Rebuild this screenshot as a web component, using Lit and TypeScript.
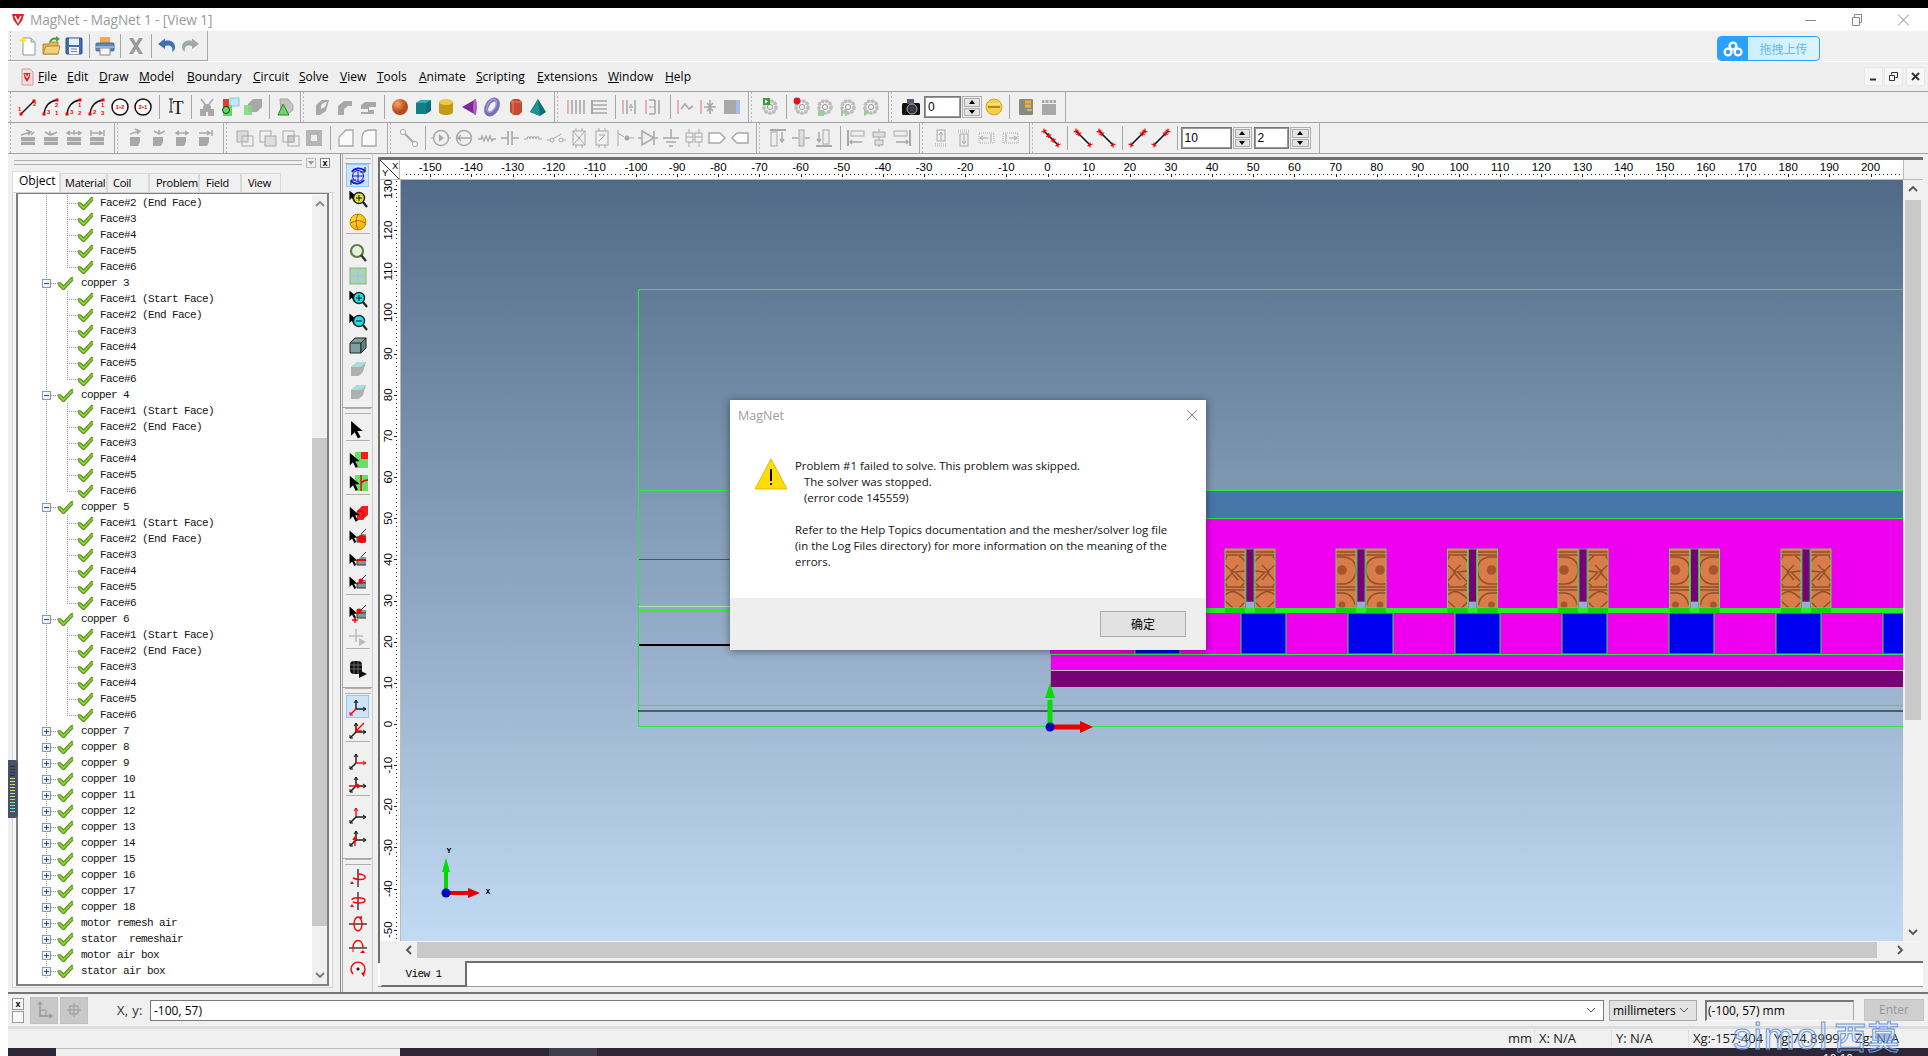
import { LitElement, html, svg, css } from "lit";
import { customElement } from "lit/decorators.js";

const D = "#a8a8a8";
const R = "#f00";
const sq = (x: number, y: number, c = R) => svg`<rect x=${x - 1.5} y=${y - 1.5} width="3" height="3" fill=${c} />`;
const t = (x: number, y: number, s: string, c = R, f = 6) => svg`<text x=${x} y=${y} font-size=${f} fill=${c} font-family="Liberation Sans" font-weight="700">${s}</text>`;
const cursor = (x = 0, y = 0, s = 1) => svg`<path transform="translate(${x} ${y}) scale(${s})" d="M2 2v14l3.5-3.5 3 6 2.5-1.3-3-5.7h5z" fill="#000"/>`;
const lens = (c: string, sign = "", tool = true) => svg`${tool ? cursor(0, 0, 0.7) : ""}<circle cx="11" cy="9" r="5.5" fill=${c} stroke="#222" stroke-width="1.4"/><path d="M15 13l4 5" stroke="#222" stroke-width="2.2"/>${sign === "+" ? svg`<path d="M8 9h6M11 6v6" stroke="#111"/>` : sign === "-" ? svg`<path d="M8 9h6" stroke="#111"/>` : ""}`;
const arcI = (a: string, b: string, c: string) => svg`<path d="M3 17C4 9 9 4 16 3" fill="none" stroke="#111" stroke-width="1.3"/>${sq(3, 17)}${sq(16, 3)}${t(6, 17, a)}${t(14, 10, b)}${t(14, 18, c)}`;
const circ = (s: string) => svg`<circle cx="10" cy="10" r="8" fill="#fff" stroke="#111" stroke-width="1.5"/><text x="10" y="12" text-anchor="middle" font-size="6" fill="#e00" font-weight="700" font-family="Liberation Sans">${s}</text>`;
const blockA = (d: string) => svg`<rect x="3" y="9" width="14" height="8" fill=${D}/><rect x="3" y="13" width="14" height="1" fill="#ddd"/><path d=${d} stroke=${D} stroke-width="1.5" fill="none"/>`;
const blockB = (d: string) => svg`<path d="M4 9h10v5l-2 4H4z" fill=${D}/><path d=${d} stroke=${D} stroke-width="1.5" fill="none"/>`;
const overlap = (a: number) => svg`<rect x="2" y="3" width="11" height="11" fill=${a === 1 ? "#ddd" : "none"} stroke=${D}/><rect x="7" y="8" width="11" height="10" fill=${a === 2 ? "#ddd" : "none"} stroke=${D}/>${a === 3 ? svg`<rect x="7" y="8" width="6" height="6" fill="#ccc" stroke=${D}/>` : ""}`;
const gear = (c = "#bdbdbd") => svg`<circle cx="10" cy="10" r="6" fill="none" stroke=${c} stroke-width="3.6" stroke-dasharray="2.6 1.4"/><circle cx="10" cy="10" r="6.2" fill="none" stroke=${c} stroke-width="1.4"/><circle cx="10" cy="10" r="2.6" fill="#eee" stroke="#999"/>`;
const vbars = (a: string) => svg`<path d=${a} stroke=${D} stroke-width="1.6" fill="none"/><path d="M2 3v14" stroke="#e9a0a0" stroke-width="1.6"/>`;
const redDiag = (flip = false, dense = false) => {
  const pts = dense ? [0, 0.33, 0.66, 1] : [0, 1];
  return svg`<g transform=${flip ? "translate(20 0) scale(-1 1)" : ""}><path d="M3 3L17 17" stroke="#111" stroke-width="1.6"/>${pts.concat(dense ? [] : [0.2]).map((p) => svg`<path d="M${3 + 14 * p - 2.5} ${3 + 14 * p + 1}l5 -2M${3 + 14 * p} ${3 + 14 * p - 2.5}v5" stroke=${R} stroke-width="1.2"/>`)}</g>`;
};
const face = (extra: any, fill = "#7d9a9b") => svg`${cursor(0, 2, 0.75)}<path d="M9 10l4-3h5v8H9z" fill=${fill}/><path d="M13 7l5-5" stroke="#333"/><path d="M9 10h9M9 10v5h9" stroke="#333" fill="none"/>${extra}`;
const triad = (x: string, y: string, z: string) => svg`<path d="M8 3v9" stroke=${y} stroke-width="1.4"/><path d="M6 6l2-3 2 3" fill="none" stroke=${y}/><path d="M8 12h10" stroke=${x} stroke-width="1.4"/><path d="M15 10l3 2-3 2" fill="none" stroke=${x}/><path d="M8 12l-6 6" stroke=${z} stroke-width="1.4"/><path d="M2 15v3h3" fill="none" stroke=${z}/>`;
const rot = (d: string) => svg`<path d="M10 1v18" stroke="#111" stroke-width="1.2"/><path d=${d} fill="none" stroke=${R} stroke-width="1.4"/><path d="M4 13l-2 3 4 0z" fill=${R}/>`;

const IC: Record<string, any> = {
  new: svg`<path d="M5 2h8l4 4v13H5z" fill="#fff" stroke="#8a9aa8"/><path d="M13 2v4h4" fill="#dde" stroke="#8a9aa8"/><path d="M5 0l1.3 3 3 1.2-3 1.2L5 8.5 3.7 5.4 .7 4.2l3-1.2z" fill="#ffdd33"/>`,
  open: svg`<path d="M2 8h6l1-2h8v12H2z" fill="#e3b755" stroke="#b08a30"/><path d="M2 18l3-8h14l-2 8z" fill="#f4d27c" stroke="#b08a30"/><path d="M9 6c1-3 4-4 7-3" stroke="#3aa53a" stroke-width="2" fill="none"/><path d="M15 0l4 3-4 3z" fill="#3aa53a"/>`,
  save: svg`<rect x="2" y="2" width="16" height="16" rx="1" fill="#3f6fa8" stroke="#24507f"/><rect x="5" y="2.500" width="10" height="6.500" fill="#e9eef5"/><rect x="5" y="11" width="10" height="7" fill="#f4f4f4"/><rect x="7" y="12.500" width="6" height="1" fill="#789"/><rect x="7" y="15" width="6" height="1" fill="#789"/>`,
  print: svg`<rect x="5" y="1" width="10" height="6" fill="#f4a944"/><rect x="1" y="7" width="18" height="8" rx="1" fill="#5a88b8" stroke="#4a6a8a"/><rect x="5" y="12" width="10" height="7" fill="#f5f5f5" stroke="#888"/><rect x="1" y="10" width="18" height="2" fill="#8fb4d8"/>`,
  del: svg`<path d="M3 2h4l3 5 3-5h4l-5 8 5 8h-4l-3-5-3 5H3l5-8z" fill="#999"/>`,
  undo: svg`<path d="M8 5c5-1.500 10 1 10 6 0 2-1 4-3 5 1-2.500 0-6-3-6.500-1.500-.3-3 0-4 .5v3L1 8l7-5.500z" fill="#3e73b5"/>`,
  redo: svg`<path d="M12 5C7 3.500 2 6 2 11c0 2 1 4 3 5-1-2.500 0-6 3-6.500 1.500-.3 3 0 4 .5v3l7-5-7-5.500z" fill="#a0a8a8"/>`,
  line: svg`<path d="M3 17L16 4" stroke="#111" stroke-width="1.4"/>${sq(3, 17)}${sq(16, 4)}${t(0, 14, "1")}${t(15, 9, "2")}`,
  arc1: arcI("3", "2", "1"), arc2: arcI("3", "1", "2"), arc3: arcI("2", "1", "3"),
  c12: circ("1•2"), c21: circ("2•1"),
  it: svg`<path d="M4 2h4M6 2v13M4 15h4" stroke="#111" fill="none"/><text x="13" y="17" text-anchor="middle" font-size="18" font-family="Liberation Serif" fill="#111">T</text>`,
  scis: svg`<path d="M4 2l6 8 6-8M10 9" stroke=${D} stroke-width="1.5" fill="none"/><path d="M3 12h6v7H3zM11 12h6v7h-6z" fill=${D}/><circle cx="10" cy="11" r="4" fill=${D}/>`,
  redg: svg`<rect x="10" y="1" width="9" height="8" fill="#bfe9f4" stroke="#8cc"/><rect x="3" y="8" width="9" height="11" fill="#62d862"/><rect x="3" y="2" width="6" height="8" fill="#e33"/><circle cx="6" cy="13" r="3.500" fill="none" stroke="#141"/>`,
  grayg: svg`<path d="M5 7l5-5h9v8l-5 5H5z" fill=${D}/><path d="M1 8h8v10H1z" fill="#7fd87f" opacity=".85"/>`,
  tri: svg`<path d="M5 2h8l5 6v5l-4 3H6z" fill="#c4c4c4" stroke="#aaa"/><path d="M3 18L8 7l6 11z" fill="#73d173" stroke="#2b8a2b"/>`,
  ext1: svg`<path d="M4 8l6-5h7l-3 11-6 4H4z" fill=${D}/><path d="M9 8l4-3h2l-2 5-4 2z" fill="#e8f4f4"/>`,
  ext2: svg`<path d="M3 18V9l6-5h8v5h-4l-4 3v6z" fill=${D}/>`,
  ext3: svg`<path d="M3 12V8l4-3h11v5h-7v3h5v4H3v-2h7v-3z" fill=${D}/>`,
  sph: svg`<defs><radialGradient id="sg" cx=".35" cy=".3"><stop offset="0" stop-color="#f5a86a"/><stop offset="1" stop-color="#b54c1c"/></radialGradient></defs><circle cx="10" cy="10" r="8" fill="url(#sg)"/>`,
  box: svg`<path d="M3 6l5-3h10v11l-5 3H3z" fill="#0e6f76"/><path d="M3 6h10v11H3z" fill="#0f7f88"/><path d="M3 6l5-3h10l-5 3z" fill="#3aa9ae"/>`,
  cyl: svg`<path d="M3 5v10c0 4 14 4 14 0V5z" fill="#c29a14"/><ellipse cx="10" cy="5" rx="7" ry="3" fill="#ecc94a"/>`,
  cone: svg`<path d="M3 10L17 2v16z" fill="#7b2b92"/><ellipse cx="16" cy="10" rx="2" ry="8" fill="#b060c8"/>`,
  torus: svg`<ellipse cx="10" cy="10" rx="5" ry="8" transform="rotate(30 10 10)" fill="none" stroke="#7a6fb5" stroke-width="4"/><ellipse cx="9" cy="9" rx="4" ry="7" transform="rotate(30 10 10)" fill="none" stroke="#a79be0" stroke-width="1.4"/>`,
  barrel: svg`<path d="M5 5l3-3h6l3 3v10l-3 3H8l-3-3z" fill="#c44a30"/><path d="M8 2v16M5 5h12" stroke="#e8825c"/>`,
  pyr: svg`<path d="M10 2l8 13-6 4-10-4z" fill="#0f6f78"/><path d="M10 2l2 17-10-4z" fill="#1f9296"/>`,
  v1: vbars("M6 3v14M10 3v14M14 3v14M18 3v14"),
  v2: svg`<path d="M3 3v14" stroke=${D} stroke-width="2"/><path d="M3 4h15M3 8h15M3 12h15M3 16h15" stroke=${D} stroke-width="1.6"/>`,
  v3: svg`${vbars("M6 3v14M14 3v14")}<path d="M8 10h4M10 7v2M10 12v2" stroke=${D} stroke-width="1.5"/>`,
  v4: svg`${vbars("M5 3h6M11 3v14M5 17h6M15 3v14")}<path d="M5 10h6" stroke=${D}/>`,
  v5: svg`${vbars("M5 12l4-5 4 5 4-3")}`,
  v6: svg`${vbars("M5 10h12M11 3v5M11 12v5M8 6l3 3 3-3M8 14l3-3 3 3")}`,
  v7: svg`<rect x="2" y="3" width="15" height="14" fill=${D}/><rect x="14" y="3" width="4" height="14" fill="#a8b8f0"/>`,
  run: svg`${gear()}<path d="M3 1h7v7H3z" fill="#3a9a3a"/><path d="M5 2.500l3 2-3 2z" fill="#fff"/>`,
  grec: svg`${gear()}<circle cx="5" cy="4" r="3.400" fill="#e01025"/>`,
  g1: svg`${gear()}<path d="M3 13h6v6H3z" fill="#9bcc9b"/>`,
  g2: svg`${gear()}<path d="M3 12h2v7H3zM7 12h2v7H7z" fill="#9bcc9b"/>`,
  g3: svg`${gear()}<path d="M3 12l6 3.500L3 19z" fill="#9bcc9b"/>`,
  cam: svg`<rect x="1" y="6" width="18" height="12" rx="1.500" fill="#111"/><rect x="6" y="2" width="7" height="5" fill="#556"/><circle cx="11" cy="12" r="5" fill="#333" stroke="#aaa"/><circle cx="11" cy="12" r="2.500" fill="#345"/>`,
  gold: svg`<circle cx="10" cy="10" r="8" fill="#f0d050" stroke="#d8a820"/><rect x="4" y="9" width="12" height="2" fill="#b88a00"/><path d="M4 7h12" stroke="#fff3b0"/>`,
  film: svg`<rect x="3" y="2" width="14" height="16" rx="1" fill="#8a8a7a"/><path d="M9 5h6M9 9h6" stroke="#f5b030" stroke-width="3"/><path d="M11 13h5" stroke="#ddd"/>`,
  clap: svg`<rect x="3" y="7" width="14" height="11" fill=${D}/><path d="M3 3h14v3H3z" fill=${D}/><path d="M6 3v3M10 3v3M14 3v3" stroke="#eee"/>`,
  a1: blockA("M3 7l10-3M8 2l5 2-3 3M16 4l-3 3"), a2: blockA("M4 4l5 3 7-3M9 3v4l4-1"), a3: blockA("M3 5h14M6 3l-3 2 3 2M14 3l3 2-3 2M10 2v5"), a4: blockA("M3 5h11M12 3l3 2-3 2M17 2v6M4 2v6"),
  b1: blockB("M4 6l10-3M9 1l5 2-3 3"), b2: blockB("M5 3l5 3 6-3M10 2v4l3-1"), b3: blockB("M4 5h12M7 3L4 5l3 2M13 3l3 2-3 2"), b4: blockB("M4 5h10M12 3l3 2-3 2M17 2v6"),
  o1: overlap(1), o2: overlap(2), o3: overlap(3),
  o4: svg`<rect x="2" y="2" width="16" height="16" fill="#b5b5b5"/><rect x="7" y="7" width="6" height="6" fill="#eee"/>`,
  cham: svg`<path d="M3 18V9l7-7h7v16z" fill="#fafafa" stroke=${D} stroke-width="1.3"/>`,
  fil: svg`<path d="M3 18V10c0-5 3-8 8-8h6v16z" fill="#fafafa" stroke=${D} stroke-width="1.3"/>`,
  wire: svg`<path d="M4 4l12 12" stroke=${D} stroke-width="2"/><circle cx="4" cy="4" r="2.600" fill="#fff" stroke=${D}/><circle cx="16" cy="16" r="2.600" fill="#fff" stroke=${D}/>`,
  srcv: svg`<circle cx="10" cy="10" r="7.500" fill="none" stroke=${D} stroke-width="1.500"/><path d="M8 6l5 4-5 4z" fill=${D}/><path d="M0 10h3M17 10h3" stroke=${D}/>`,
  srci: svg`<circle cx="10" cy="10" r="7.500" fill="none" stroke=${D} stroke-width="1.500"/><path d="M3 10h14M7 7l-3 3 3 3" fill="none" stroke=${D} stroke-width="1.3"/>`,
  res: svg`<path d="M1 11h3l1-3 2 5 2-5 2 5 2-5 2 5 1-2h3" fill="none" stroke=${D} stroke-width="1.3"/>`,
  capa: svg`<path d="M1 10h7M12 10h7M8 3v14M12 3v14" stroke=${D} stroke-width="1.6"/>`,
  ind: svg`<path d="M1 11h3c0-3 3-3 3 0 0-3 3-3 3 0 0-3 3-3 3 0 0-3 3-3 3 0h3" fill="none" stroke=${D} stroke-width="1.2"/>`,
  sw: svg`<circle cx="6" cy="12" r="2" fill="none" stroke=${D}/><circle cx="15" cy="12" r="2" fill="none" stroke=${D}/><path d="M7 11l8-5M1 12h3M17 12h3" stroke=${D}/>`,
  bx: svg`<rect x="4" y="3" width="12" height="14" fill="none" stroke=${D}/><path d="M4 3l12 14M16 3L4 17M7 0v3M13 0v3M7 17v3M13 17v3" stroke=${D}/>`,
  bb: svg`<rect x="4" y="3" width="12" height="14" fill="none" stroke=${D}/><path d="M7 7h6M13 7l-6 6M7 0v3M13 0v3M7 17v3M13 17v3" stroke=${D}/>`,
  bsw: svg`<path d="M3 2v16" stroke=${D}/><path d="M3 5l6 4" stroke=${D}/><circle cx="12" cy="10" r="2.500" fill=${D}/><path d="M15 10h4" stroke=${D}/>`,
  dio: svg`<path d="M0 10h4M16 10h4M16 3v14" stroke=${D} stroke-width="1.500"/><path d="M4 3l12 7-12 7z" fill="#eee" stroke=${D} stroke-width="1.500"/>`,
  gnd: svg`<path d="M10 1v9M2 10h16M5 14h10M8 18h4" stroke=${D} stroke-width="1.500"/>`,
  dbl: svg`<rect x="2" y="5" width="7" height="9" fill="none" stroke=${D}/><rect x="11" y="5" width="7" height="9" fill="none" stroke=${D}/><path d="M5 1v4M15 1v4M5 14v5M15 14v5M2 9h7M11 9h7" stroke=${D}/>`,
  tagr: svg`<path d="M2 5h11l5 5-5 5H2z" fill="#fff" stroke=${D} stroke-width="1.500"/>`,
  tagl: svg`<path d="M18 5H7l-5 5 5 5h11z" fill="#fff" stroke=${D} stroke-width="1.500"/>`,
  al1: svg`<path d="M2 2h16" stroke=${D} stroke-width="2"/><rect x="3" y="4" width="6" height="14" fill="#eee" stroke=${D}/><path d="M14 4v9M12 11l2 3 2-3" stroke=${D} stroke-width="1.400" fill="none"/>`,
  al2: svg`<rect x="8" y="2" width="5" height="16" fill="#ddd" stroke=${D}/><path d="M1 10h6M19 10h-5" stroke=${D} stroke-width="1.600"/>`,
  al3: svg`<path d="M2 18h16" stroke=${D} stroke-width="2"/><rect x="9" y="2" width="6" height="14" fill="#eee" stroke=${D}/><path d="M5 4v10M3 11l2 3 2-3" stroke=${D} stroke-width="1.400" fill="none"/>`,
  al4: svg`<path d="M2 2v16" stroke=${D} stroke-width="2"/><rect x="5" y="3" width="13" height="5" fill="#eee" stroke=${D}/><path d="M4 14h12M6 12l-2 2 2 2" stroke=${D} stroke-width="1.400" fill="none"/>`,
  al5: svg`<path d="M10 1v18" stroke=${D}/><rect x="4" y="4" width="12" height="5" fill="#ddd" stroke=${D}/><rect x="6" y="12" width="8" height="5" fill="#ddd" stroke=${D}/>`,
  al6: svg`<path d="M18 2v16" stroke=${D} stroke-width="2"/><rect x="2" y="3" width="13" height="5" fill="#eee" stroke=${D}/><path d="M16 14H4M14 12l2 2-2 2" stroke=${D} stroke-width="1.400" fill="none"/>`,
  ds1: svg`<rect x="6" y="2" width="8" height="11" fill="#eee" stroke=${D}/><path d="M10 12V5M8 7l2-3 2 3" stroke=${D} fill="none"/><path d="M4 16h12M4 18h12" stroke=${D} stroke-dasharray="1 1"/>`,
  ds2: svg`<path d="M4 2h12M4 4h12" stroke=${D} stroke-dasharray="1 1"/><rect x="6" y="6" width="8" height="12" fill="#eee" stroke=${D}/><path d="M10 7v8M8 13l2 3 2-3" stroke=${D} fill="none"/>`,
  ds3: svg`<rect x="2" y="5" width="15" height="10" fill="#eee" stroke=${D} stroke-dasharray="1 1"/><path d="M11 10H4M6 8l-3 2 3 2M14 6v8" stroke=${D} fill="none"/>`,
  ds4: svg`<rect x="3" y="5" width="15" height="10" fill="#eee" stroke=${D} stroke-dasharray="1 1"/><path d="M9 10h7M14 8l3 2-3 2M6 6v8" stroke=${D} fill="none"/>`,
  rd0: redDiag(false, true), rd1: redDiag(), rd2: redDiag(), rd3: redDiag(true), rd4: redDiag(true),
  vrot: svg`<path d="M4 6c2-4 9-5 13-1M16 14c-3 4-9 5-13 1" fill="none" stroke="#1a1ae0" stroke-width="1.800"/><path d="M17 1v5h-5M3 19v-5h5" fill="none" stroke="#111"/><circle cx="10" cy="10" r="5.500" fill="none" stroke="#1a1ae0"/><path d="M4.500 10h11M10 4.500v11" stroke="#1a1ae0"/>`,
  vz1: lens("#d8e040", "+"),
  vball: svg`<defs><radialGradient id="yb" cx=".4" cy=".35"><stop offset="0" stop-color="#ffef50"/><stop offset="1" stop-color="#f0b800"/></radialGradient></defs><circle cx="10" cy="10" r="8" fill="url(#yb)" stroke="#b89000"/><path d="M3 11c5-3 9-3 14 0M10 2c-3 6-2 11 0 16" stroke="#e04020" fill="none"/>`,
  vz2: svg`<circle cx="9" cy="8" r="6" fill="#e6f0e0" stroke="#5a8040" stroke-width="2.200"/><path d="M13 12l5 6" stroke="#333" stroke-width="2.400"/>`,
  vfit: svg`<rect x="2" y="2" width="16" height="16" fill="#a9d8a9" stroke="#8ab08a"/><path d="M10 3l3 3h-2v3h3V7l3 3-3 3v-2h-3v3h2l-3 3-3-3h2v-3H6v2l-3-3 3-3v2h3V6H7z" fill="#a8c4e8"/>`,
  vz3: lens("#20e0e8", "+"), vz4: lens("#20e0e8", "-"),
  vbox: svg`<path d="M2 8l5-5h11l-5 5v10H2z" fill="#7d9fa0" stroke="#222"/><path d="M13 8l5-5v10l-5 5z" fill="#5f8283" stroke="#222"/><path d="M2 8h11l5-5" fill="none" stroke="#222"/>`,
  vg1: svg`<path d="M3 9l6-5h9l-3 10-4 4H3z" fill="#b0b0b0"/><path d="M3 9l6-5h9l-5 5z" fill="#a8dce0"/>`,
  arrow: svg`${cursor(1, 0, 1.05)}`,
  cg1: svg`<rect x="7" y="2" width="13" height="16" fill="#69dc69"/><path d="M13 2h7v7h-7z" fill="#f02020"/>${cursor(0, 1, .9)}`,
  cg2: svg`<rect x="7" y="2" width="13" height="16" fill="#69dc69"/><path d="M13 2v16M13 10c2-2 4-3 7-3" stroke="#e00" stroke-width="1.400" fill="none"/>${cursor(0, 1, .9)}`,
  f1: svg`<path d="M9 7l5-5h6v9l-6 5H9z" fill="#f02020"/><path d="M9 7h6v9" stroke="#c00" fill="none"/>${cursor(0, 1, .9)}`,
  f2: face(svg`<circle cx="14" cy="12" r="4" fill="#f00"/>`),
  f3: face(svg`<path d="M9 10h9" stroke="#f00" stroke-width="2"/>`),
  f4: face(svg`<circle cx="13" cy="8" r="2.500" fill="#f00"/>`),
  f5: svg`<g transform="translate(0 -1)">${face(svg`<circle cx="11" cy="8" r="2.600" fill="#f00"/>`)}</g><path d="M7 13v6M4 16h6" stroke="#f00" stroke-width="1.400"/>`,
  cross: svg`<path d="M8 2v13M1 9h14" stroke="#bbb" stroke-width="1.500"/><path d="M11 11l7 4-7 4z" fill="#bbb"/>`,
  mesh: svg`<rect x="2" y="3" width="12" height="13" rx="4" fill="#111"/><path d="M2 7h12M2 11h12M6 3v13M10 3v13" stroke="#888" stroke-width=".7"/><path d="M11 12l8 4-8 4z" fill="#111"/>`,
  ax1: triad("#111", "#111", R), ax2: svg`${triad("#111", "#111", "#111")}<path d="M16 3L8 11M8 5v6h6" stroke=${R} stroke-width="1.400" fill="none"/>`,
  ax3: triad(R, "#111", "#111"), ax4: svg`${triad("#111", "#111", "#111")}<path d="M1 12h11M9 10l3 2-3 2" stroke=${R} stroke-width="1.400" fill="none"/>`,
  ax5: triad("#111", R, "#111"), ax6: svg`${triad("#111", "#111", "#111")}<path d="M7 18v-9M5 12l2-3 2 3" stroke=${R} stroke-width="1.400" fill="none"/>`,
  r1: rot("M10 6c5 0 8 2 7 4s-8 2-12 0"),
  r2: rot("M4 9c0-3 12-3 13 0s-7 4-12 2"),
  r3: svg`<path d="M1 10h18" stroke="#111" stroke-width="1.200"/><ellipse cx="10" cy="10" rx="4" ry="7" fill="none" stroke=${R} stroke-width="1.400"/><path d="M14 2l-3 1 3 2z" fill=${R}/>`,
  r4: svg`<path d="M1 11h18" stroke="#111" stroke-width="1.200"/><path d="M5 11c0-10 10-10 10 0" fill="none" stroke=${R} stroke-width="1.400"/><path d="M15 13l-3 3h5z" fill=${R}/><path d="M5 11v4" stroke=${R}/>`,
  r5: svg`<path d="M5 14A7 7 0 1 1 15 14" fill="none" stroke=${R} stroke-width="1.400"/><path d="M13 13l3 4 1-5z" fill=${R}/><circle cx="10" cy="9" r="1" fill="#111"/><path d="M8 9h4M10 7v4" stroke="#111" stroke-width=".8"/>`,
};

const ROW3 = [
  { w: 293, g: 8.5, items: ["line", "arc1", "arc2", "arc3", "c12", "c21", "|", "it", "|", "scis", "redg", "grayg", "|", "tri"] },
  { w: 254, g: 9.5, items: ["ext1", "ext2", "ext3", "|", "sph", "box", "cyl", "cone", "torus", "barrel", "pyr"] },
  { w: 194, g: 9.5, items: ["v1", "v2", "|", "v3", "v4", "|", "v5", "v6", "v7"] },
  { w: 140, g: 9.5, items: ["run", "|", "grec", "g1", "g2", "g3"] },
  { w: 177, g: 10.5, items: ["cam", "num:0:37:1.5", "spin:20", "gold", "|", "film", "clap"] },
];
const ROW4 = [
  { w: 107, g: 8.5, items: ["a1", "a2", "a3", "a4"] },
  { w: 109, g: 9.5, items: ["b1", "b2", "b3", "b4"] },
  { w: 164, g: 9.5, items: ["o1", "o2", "o3", "o4", "|", "cham", "fil"] },
  { w: 369, g: 9.5, items: ["wire", "|", "srcv", "srci", "res", "capa", "ind", "sw", "bx", "bb", "bsw", "dio", "gnd", "dbl", "tagr", "tagl"] },
  { w: 163, g: 9.5, items: ["al1", "al2", "al3", "|", "al4", "al5", "al6"] },
  { w: 110, g: 9.5, items: ["ds1", "ds2", "ds3", "ds4"] },
  { w: 290, g: 9.5, items: ["rd0", "|", "rd1", "rd2", "|", "rd3", "rd4", "|", "num:10:51:-1", "spin:19", "num:2:35:2", "spin:21"] },
];
const VT = [
  { h: 250, items: ["vrot:sel", "vz1", "vball", "-", "vz2", "vfit", "vz3", "vz4", "vbox", "vg1", "vg1"] },
  { h: 280, items: ["arrow", "-", "cg1", "cg2", "-", "f1", "f2", "f3", "f4", "-", "f5", "cross", "-", "mesh"] },
  { h: 171, items: ["ax1:sel", "ax2", "-", "ax3", "ax4", "-", "ax5", "ax6"] },
  { h: 128, items: ["r1", "r2", "r3", "r4", "r5"] },
];

const MENU = [["F", "ile", 29], ["E", "dit", 32], ["D", "raw", 40], ["M", "odel", 48], ["B", "oundary", 66], ["C", "ircuit", 46], ["S", "olve", 41], ["V", "iew", 37], ["T", "ools", 42], ["A", "nimate", 57], ["S", "cripting", 61], ["E", "xtensions", 71], ["W", "indow", 57], ["H", "elp", 40]] as const;

type Row = { k: "p" | "c" | "x"; s: string; last?: boolean };
const TREE: Row[] = [];
const faces = ["Face#1 (Start Face)", "Face#2 (End Face)", "Face#3", "Face#4", "Face#5", "Face#6"];
faces.slice(1).forEach((s, i) => TREE.push({ k: "c", s, last: i === 4 }));
for (const n of [3, 4, 5, 6]) {
  TREE.push({ k: "p", s: `copper ${n}` });
  faces.forEach((s, i) => TREE.push({ k: "c", s, last: i === 5 }));
}
for (let n = 7; n <= 18; n++) TREE.push({ k: "x", s: `copper ${n}` });
["motor remesh air", "stator  remeshair", "motor air box", "stator air box"].forEach((s) => TREE.push({ k: "x", s }));

const X = (v: number) => 1047.5 + 4.115 * v;
const Y = (v: number) => 724 - 4.115 * v;
const range = (a: number, b: number, s = 1) => { const r: number[] = []; for (let i = a; i <= b; i += s) r.push(i); return r; };
const G = "#2ee83a";

const half = (x: number, kind: string, flip: boolean) => svg`
  <g transform=${`translate(${flip ? x + 20 : x} 549) scale(${flip ? -1 : 1} 1)`}>
    <rect width="20" height="59" fill="#d87c49"/>
    <g fill="none" stroke="#8f4f2a" stroke-width="1.4">
      <path d="M0 3h20M0 6h20M0 38h20M0 41h20"/>
      ${kind === "x"
        ? svg`<path d="M2 7l-2 4M14 7c3 2 5 3 6 6M0 16l8 7-8 9M20 22l-10 1 10 10M6 23l7-7M6 23l7 8M2 37l-2-3M16 37l4-3"/><path d="M0 46c4-3 8-4 10-3 3 1 6 3 10 7M0 52l8 7M14 59l6-6"/>`
        : svg`<path d="M0 8h8c8 1 12 6 12 13s-4 13-12 14H0"/><path d="M0 44h8c6 1 10 5 11 12"/>`}
    </g>
    ${kind === "x" ? "" : svg`<circle cx="6" cy="21" r="4.800" fill="#a6552f"/><circle cx="6" cy="56" r="3.400" fill="#a6552f"/>`}
  </g>`;
const COILS: [number, string, string][] = [[1225, "x", "x"], [1336, "d", "d"], [1447.5, "x", "d"], [1558, "d", "x"], [1669.5, "d", "d"], [1781, "x", "x"]];

@customElement("app-icon")
class AppIcon extends LitElement {
  static properties = { name: {} };
  name = "";
  static styles = css`:host{display:block;width:20px;height:20px}svg{display:block;overflow:visible}`;
  render() {
    return html`<svg width="20" height="20" viewBox="0 0 20 20">${IC[this.name]}</svg>`;
  }
}

@customElement("app-root")
export class AppRoot extends LitElement {
  static styles = css`
    :host{display:block;width:1928px;height:1056px;overflow:hidden;position:relative;background:#fff;font-family:"Open Sans","Noto Sans CJK SC",sans-serif;font-size:12px;color:#000}
    .black{height:8px;background:#000}
    .shell{display:flex;height:1040px}
    .strip{width:8px;background:#fff;flex:none}
    .app{flex:1;display:flex;flex-direction:column;min-width:0;background:#f0f0f0}
    .title{height:23px;background:#fff;display:flex;align-items:center;padding-left:3px;color:#9a9a9a;font-size:13.7px;letter-spacing:-.1px;gap:5px;flex:none}
    .winbtns{margin-left:auto;display:flex;margin-right:2px}
    .winbtns svg{display:block;width:46px;height:14px}
    .row{display:flex;height:30px;border-bottom:1px solid #a2a2a2;box-sizing:content-box;flex:none}
    .row.r1{border-bottom:1px solid #fff;position:relative}
    .grp{display:flex;align-items:center;height:30px;border-right:1px solid #aaa;box-sizing:border-box;flex:none}
    .grp.b{border-bottom:1px solid #a2a2a2}
    .grip{align-self:stretch;flex:none;background-image:radial-gradient(circle,#b8b8b8 .8px,transparent .9px);background-size:3px 4px;background-repeat:repeat-y;background-position:1px 3px,4px 3px}
    .slot{width:23px;height:24px;display:flex;align-items:center;justify-content:center;flex:none}
    .sep{width:9px;height:24px;flex:none;display:flex;justify-content:center}
    .sep.n{width:8px}
    .sep::before{content:"";width:1px;background:#a6a6a6}
    .num{height:22px;box-sizing:border-box;border:1px solid #777;outline:1px solid #999;outline-offset:-2px;background:#fff;padding:0 3px;line-height:20px;font-family:"Liberation Sans",sans-serif;font-size:12px;flex:none}
    .spin{display:flex;flex-direction:column;gap:1px;height:22px;border:1px solid #b0b0b0;box-sizing:border-box;padding:1px;flex:none;margin-left:1px}
    .spin i{flex:1;background:#e4e4e4;border:1px solid #aaa;display:flex;align-items:center;justify-content:center}
    .up{width:0;height:0;border:3px solid transparent;border-top:0;border-bottom:4px solid #000}
    .dn{width:0;height:0;border:3px solid transparent;border-bottom:0;border-top:4px solid #000}
    .cloud{position:absolute;left:1709px;top:5px;width:103px;height:25px;box-sizing:border-box;border:1px solid #2aa0ff;border-radius:4px;display:flex;overflow:hidden;background:linear-gradient(90deg,#c8ecff,#dcf3ff)}
    .cloud b{width:30px;background:#2aa0ff;display:flex;align-items:center;justify-content:center}
    .cloud span{flex:1;text-align:center;color:#5fbcf4;font-size:12px;line-height:23px;font-family:"Noto Sans CJK SC",sans-serif}
    .menu{align-items:center;padding-left:8px;background:#efefef;height:29px}
    .menu .logo{width:22px;display:flex;justify-content:center}
    .mi{flex:none;font-size:12px;white-space:pre}
    .mdi{margin-left:auto;display:flex;gap:1px;margin-right:3px}
    .mdi i{width:17px;height:17px;background:#f6f6f6;border:1px solid #e8e8e8;display:flex;align-items:center;justify-content:center}
    .mdi svg{display:block}
    .main{flex:none;height:838px;display:flex}
    .left{width:333px;flex:none;border-right:1px solid #888;box-sizing:border-box;display:flex;flex-direction:column;padding:0 7px 0 4px}
    .dock{height:17px;display:flex;align-items:center;gap:4px;padding:0 3px 0 2px;flex:none;margin-right:0}
    .dock .ln{flex:1;box-sizing:border-box;height:5px;border:solid #b0b0b0;border-width:1px 0}
    .dock .b1,.dock .b2{width:10px;height:10px;display:flex;align-items:center;justify-content:center;font-size:9px;line-height:10px;box-sizing:border-box;border:1px solid #bbb;flex:none}
    .dock .b2{border-color:#888;background:#f8f8f8;font-weight:700;font-family:"Liberation Sans"}
    .tabs{display:flex;height:21px;flex:none;align-items:flex-end}
    .tab{height:19px;border:1px solid #d8d8d8;border-bottom:0;box-sizing:border-box;background:#f0f0f0;line-height:18px;font-size:11px;text-align:left;padding-left:4px;flex:none;letter-spacing:-.25px;white-space:nowrap;overflow:hidden}
    .tab.on{height:21px;background:#fff;padding-left:6px;letter-spacing:0;font-size:12px;border-color:#ddd}
    .tabbody{flex:1;border:1px solid #d4d4d4;padding:0 3px 1px 3px;display:flex;min-height:0;background:#f7f7f7;margin-bottom:4px}
    .tree{flex:1;border:1px solid #7f7f7f;border-width:1px 2px 2px 2px;background:#fff;display:flex;min-width:0;overflow:hidden}
    .rows{flex:1;padding-top:1px;font-family:"Liberation Mono",monospace;font-size:11px;letter-spacing:-.6px;overflow:hidden;color:#111}
    .rowt{height:16px;display:flex;align-items:center;white-space:pre;background-repeat:no-repeat;
      background-image:repeating-linear-gradient(to bottom,#999 0 1px,transparent 1px 2px);background-size:1px 100%;background-position:28px 0}
    .rowt.c{padding-left:60px;background-image:repeating-linear-gradient(to bottom,#999 0 1px,transparent 1px 2px),repeating-linear-gradient(to bottom,#999 0 1px,transparent 1px 2px),repeating-linear-gradient(to right,#999 0 1px,transparent 1px 2px);background-size:1px 100%,1px 100%,12px 1px;background-position:28px 0,49px 0,49px 8px}
    .rowt.c.l{background-size:1px 100%,1px 8px,12px 1px}
    .rowt.p{padding-left:24px}
    .exp{width:9px;height:9px;box-sizing:border-box;border:1px solid #8a9ab0;background:linear-gradient(135deg,#fff,#dfe6ee);display:flex;align-items:center;justify-content:center;flex:none;margin-right:7px;position:relative}
    .exp::after{content:"";position:absolute;left:8px;top:3px;width:7px;border-top:1px dotted #999}
    .exp::before{content:"";width:5px;height:1px;background:#2b4a8a}
    .exp.x i{position:absolute;width:1px;height:5px;background:#2b4a8a;left:3px;top:1px}
    .rowt svg{flex:none;display:block}
    .rowt.p svg{margin-right:8px}
    .rowt.c svg{margin-right:7px}
    .sb{width:15px;flex:none;background:#f0f0f0;display:flex;flex-direction:column;margin:1px 0 0 0}
    .sbb{height:18px;display:flex;align-items:center;justify-content:center;flex:none}
    .thumb{background:#c9c9c9;flex:none}
    .vt{width:31px;margin-left:1px;flex:none;display:flex;flex-direction:column;border-right:1px solid #ccc;border-left:1px solid #aaa;box-sizing:border-box;padding-top:4px}
    .sec{display:flex;flex-direction:column;align-items:center;border-bottom:1px solid #a8a8a8;box-sizing:border-box;flex:none}
    .sec:last-child{border-bottom:0}
    .vgrip{height:6px;width:26px;border:solid #b0b0b0;border-width:1px 0;box-sizing:border-box;flex:none}
    .vi{width:23px;height:23px;display:flex;align-items:center;justify-content:center;flex:none}
    .vi.sel{background:#cce4f7;outline:1px solid #90c8f6;outline-offset:-1px}
    .vs{height:8px;width:24px;flex:none}
    .vs::before{content:"";display:block;height:1px;background:#b0b0b0}
    .view{flex:1;margin:3px 0 5px 5px;min-width:0;display:flex;flex-direction:column;position:relative}
    .frame{flex:1;min-height:0;display:flex;flex-direction:column;border-top:3px solid #6f6f6f;border-left:2px solid #6f6f6f;margin-right:5px;background:#f0f0f0;box-sizing:border-box}
    .tr{display:flex;height:20px;flex:none;border-bottom:1px solid #bbb;background:#fff;box-sizing:border-box}
    .corner{width:20px;flex:none;box-sizing:border-box;background:#fff;border-right:1px solid #bbb}
    .tr svg{display:block;flex:none}
    .tr .end{flex:1;background:#f0f0f0;border-left:1px solid #bbb}
    .mid{display:flex;flex:1;min-height:0}
    .lr{width:21px;flex:none;background:#fff;border-right:1px solid #bbb;box-sizing:border-box}
    .lr svg{display:block}
    .canvas{width:1502px;flex:none;background:linear-gradient(#516a87,#c2daf3);overflow:hidden}
    .canvas svg{display:block}
    .vs2{flex:1;width:20px;display:flex;flex-direction:column;align-items:center;background:#f0f0f0;padding:0 2px;box-sizing:border-box}
    .hs{height:16px;flex:none;display:flex;margin:0 0 3px 21px;background:#f0f0f0;border-top:1px solid #f4f4f4}
    .hs .track{flex:1;background:#c9c9c9}
    .hs .bb{width:16px;display:flex;align-items:center;justify-content:center;flex:none}
    .hs .bb.r{width:46px}
    .tabsb{height:26px;flex:none;display:flex;border-top:2px solid #6f6f6f;margin-left:-2px;background:#fff;border-bottom:1px solid #999;box-sizing:border-box}
    .vtab{width:87px;background:#f0f0f0;border-right:2px solid #6f6f6f;border-bottom:2px solid #6f6f6f;font-family:"Liberation Mono",monospace;font-size:11px;letter-spacing:-.6px;text-align:center;line-height:22px;box-sizing:border-box;margin-top:-2px;height:26px;border-left:2px solid #f0f0f0;padding-top:2px;margin-left:2px}
    .bar{height:37px;flex:none;border-top:2px solid #777;border-bottom:3px solid #ddd;box-sizing:border-box;display:flex;align-items:center;padding-left:4px}
    .xb{display:flex;flex-direction:column;width:12px;gap:1px;flex:none}
    .xb i{height:12px;border:1px solid #999;background:#f8f8f8;font-size:9px;font-weight:700;line-height:10px;text-align:center;font-style:normal;box-sizing:border-box;font-family:"Liberation Sans"}
    .ib{width:28px;height:27px;background:#c8c8c8;border:1px solid #c0c0c0;box-sizing:border-box;display:flex;align-items:center;justify-content:center;margin-right:2px;flex:none}
    .xy{margin-left:27px;width:32px;font-size:13px;color:#333;flex:none;letter-spacing:.3px}
    .inp{height:21px;box-sizing:border-box;border:1px solid #7a7a7a;background:#fff;display:flex;align-items:center;padding:0 3px;flex:none;margin-left:1px;width:1454px;font-size:12px}
    .inp svg{margin-left:auto;margin-right:4px}
    .dd{width:88px;height:21px;box-sizing:border-box;border:1px solid #a9a9a9;background:#e2e2e2;display:flex;align-items:center;padding:0 3px;flex:none;margin-left:5px;font-size:12px}
    .dd svg{margin-left:auto;margin-right:4px}
    .ro{width:149px;height:21px;box-sizing:border-box;border:2px solid #777;border-right:1px solid #aaa;border-bottom:1px solid #fff;margin-left:8px;background:#ededed;display:flex;align-items:center;padding:0 1px;font-size:12px;flex:none}
    .en{width:60px;height:22px;background:#cfcfcf;border:1px solid #c4c4c4;box-sizing:border-box;color:#999;text-align:center;line-height:20px;margin-left:10px;flex:none;font-size:12px}
    .st{flex:1;display:flex;align-items:center;justify-content:flex-end;font-size:13px;background:#f0f0f0;min-height:0;color:#222;padding-right:4px}
    .st span{box-sizing:border-box;flex:none;height:17px;line-height:17px;padding-left:4px;border-left:1px solid #ddd;white-space:nowrap}
    .st span.nb{border-left:0}
    .dlg{position:absolute;left:730px;top:400px;width:476px;height:250px;background:#fff;box-shadow:0 1px 8px rgba(0,0,0,.45);display:flex;flex-direction:column}
    .dt{height:30px;flex:none;display:flex;align-items:center;padding:0 8px;color:#9c9c9c;font-size:12.5px;justify-content:space-between;box-sizing:border-box}
    .db{flex:1;display:flex;padding:28px 0 0 25px;gap:8px}
    .dm{font-size:11.4px;line-height:16px;color:#111;white-space:nowrap}
    .dm .gap{height:16px}
    .dm .in{padding-left:9px}
    .df{height:52px;box-sizing:border-box;flex:none;background:#eee;display:flex;justify-content:flex-end;align-items:flex-start;padding:13px 20px 0 0}
    .ok{width:86px;height:26px;box-sizing:border-box;border:1px solid #adadad;background:#e1e1e1;text-align:center;line-height:24px;font-size:12px;font-family:"Noto Sans CJK SC",sans-serif}
    .task{position:absolute;left:8px;top:1048px;width:1920px;height:8px;background:#2c2637;overflow:hidden}
    .task .lt{position:absolute;left:48px;width:344px;top:0;bottom:0;background:#f0f0f0;border-top:1px solid #bbb;box-sizing:border-box}
    .task .gr{position:absolute;left:541px;width:48px;top:0;bottom:0;background:#423d4a}
    .task .clock{position:absolute;left:1815px;top:4px;color:#fff;font-size:12px;line-height:14px;font-family:"Liberation Sans"}
    .wm{position:absolute;left:1733px;top:1016px;font-family:"Liberation Sans","Noto Sans CJK SC",sans-serif;font-size:37px;line-height:38px;color:rgba(150,185,240,.12);-webkit-text-stroke:1px #6f9ade;letter-spacing:2px;white-space:nowrap;pointer-events:none}
    .wm b{font-family:"Noto Sans CJK SC",sans-serif;font-weight:500;font-size:32px;letter-spacing:1px;margin-left:5px}
    .side{position:absolute;left:8px;top:760px;width:10px;height:58px;background:#4a4f63;border-radius:0 3px 3px 0;display:flex;align-items:center;justify-content:center;box-sizing:border-box;padding-right:2px}
    .side i{width:5px;height:46px;background:repeating-linear-gradient(transparent 0 1px,#4a4f63 1px 3px),linear-gradient(#2d3140 0 26%,#e8e070 26%,#b8e080 60%,#68e0c0)}
  `;

  ic(n: string) { return html`<app-icon .name=${n}></app-icon>`; }

  group(g: any, bottom = false) {
    return html`<div class="grp ${bottom ? "b" : ""}" style="width:${g.w}px">
      <div class="grip" style="width:${g.g}px"></div>
      ${g.items.map((it: string) => {
        if (it === "|") return html`<div class="sep"></div>`;
        if (it === "!") return html`<div class="sep n"></div>`;
        if (it.startsWith("num:")) {
          const [, v, w, m] = it.split(":");
          return html`<div class="num" style="width:${w}px;margin-left:${m}px">${v}</div>`;
        }
        if (it.startsWith("spin:")) return html`<div class="spin" style="width:${it.slice(5)}px"><i><b class="up"></b></i><i><b class="dn"></b></i></div>`;
        return html`<div class="slot">${this.ic(it)}</div>`;
      })}
    </div>`;
  }

  check() {
    return html`<svg width="15" height="13" viewBox="0 0 15 13"><path d="M1.500 7l4 4L14 2" fill="none" stroke="#4f8f18" stroke-width="4" stroke-linecap="round"/><path d="M1.500 7l4 4L14 2" fill="none" stroke="#93d23e" stroke-width="1.800" stroke-linecap="round"/></svg>`;
  }

  chev(d: string, c = "#555") {
    return html`<svg width="10" height="10" viewBox="0 0 10 10"><path d=${d} fill="none" stroke=${c} stroke-width="1.800"/></svg>`;
  }

  tree() {
    return TREE.map((r) => {
      if (r.k === "c") return html`<div class="rowt c ${r.last ? "l" : ""}">${this.check()}${r.s}</div>`;
      return html`<div class="rowt p"><span class="exp ${r.k === "x" ? "x" : ""}"><i></i></span>${this.check()}${r.s}</div>`;
    });
  }

  rulerTop() {
    return html`<svg width="1503" height="19" viewBox="400 161 1503 19">
      ${range(-150, 200, 10).map((v) => svg`<text x=${X(v)} y="172" text-anchor="middle" font-size="11.5" font-family="Liberation Sans" fill="#000">${v}</text>`)}
      ${range(-156, 208).map((v) => svg`<rect x=${Math.round(X(v))} y="175" width="1" height=${v % 10 === 0 ? 3 : 1} fill="#222"/>`)}
    </svg>`;
  }

  rulerLeft() {
    return html`<svg width="20" height="759" viewBox="380 180 20 759">
      ${range(-50, 130, 10).map((v) => svg`<text transform="translate(392 ${Y(v)}) rotate(-90)" text-anchor="middle" font-size="11.5" font-family="Liberation Sans" fill="#000">${v}</text>`)}
      ${range(-52, 134).map((v) => svg`<rect x=${v % 10 === 0 ? 394 : 396} y=${Math.round(Y(v))} width=${v % 10 === 0 ? 3 : 1} height="1" fill="#222"/>`)}
    </svg>`;
  }

  model() {
    return html`<svg width="1502" height="759" viewBox="401 180 1502 759">
      <rect x="1050" y="491" width="853" height="27" fill="#4777a8"/>
      <rect x="1050" y="518" width="853" height="90" fill="#ee00ee"/>
      <rect x="1050" y="613" width="853" height="41" fill="#ee00ee"/>
      <rect x="1051" y="655" width="852" height="15" fill="#ee00ee"/>
      <rect x="1051" y="671" width="852" height="16" fill="#7a0078"/>
      <path d="M1051 670.5H1903" stroke="#b9b9c9"/>
      ${range(0, 7).map((i) => svg`<rect x=${1135 + 107 * i - (i ? 1 : 0)} y="613" width="45" height="41" fill="#0000f0" stroke=${G}/>`)}
      ${COILS.map(([x, a, b]) => svg`
        <rect x=${x + 21} y="549" width="8" height="53" fill="#7a0078" stroke=${G} stroke-width=".8"/>
        <rect x=${x + 21} y="602" width="8" height="6" fill="#8fb2cc"/>
        ${half(x, a, false)}${half(x + 30, b, true)}
        <rect x=${x} y="549" width="20" height="59" fill="none" stroke="#64d864"/>
        <rect x=${x + 30} y="549" width="20" height="59" fill="none" stroke="#64d864"/>
      `)}
      <rect x="1050" y="608" width="853" height="5" fill="#22ee22"/>
      ${COILS.map(([x]) => svg`<rect x=${x} y="608" width="20" height="5" fill="#11d011"/><rect x=${x + 30} y="608" width="20" height="5" fill="#11d011"/>`)}
      <path d="M638 610.5H1050" stroke="#33f033" stroke-width="3"/>
      <path d="M638 606.5H1050" stroke="#aee8b0" stroke-width="1"/>
      <path d="M638 645H1050" stroke="#000" stroke-width="2"/>
      <path d="M638 559.5H1050" stroke="#4a5866"/>
      <path d="M1050 518.5H1903M1050 654.5H1903" stroke=${G}/>
      <path d="M1050.5 654V690" stroke="#7fae8e"/>
      <path d="M638.5 726.5V289.5H1903M638 490.5H1903M638 726.5H1903M638 705.5H1903" fill="none" stroke=${G}/>
      <path d="M638 711H1903" stroke="#000"/>
      <path d="M1050 727V700" stroke="#00e000" stroke-width="5"/>
      <path d="M1045 698l5-15 5 15z" fill="#00e000"/>
      <path d="M1050 727h33" stroke="#e80000" stroke-width="5"/>
      <path d="M1080 721l13 6-13 6z" fill="#e80000"/>
      <circle cx="1050" cy="727" r="4.500" fill="#0000c8"/>
      <path d="M446 893v-22" stroke="#00d800" stroke-width="4"/>
      <path d="M442 872l4-14 4 14z" fill="#00e000"/>
      <path d="M446 893h24" stroke="#e80000" stroke-width="4"/>
      <path d="M468 888l12 5-12 5z" fill="#d80000"/>
      <circle cx="446" cy="893" r="4.500" fill="#0000c8"/>
      <text x="449" y="853" font-size="8" font-weight="700" text-anchor="middle" font-family="Liberation Mono">Y</text>
      <text x="488" y="894" font-size="8" font-weight="700" text-anchor="middle" font-family="Liberation Mono">X</text>
    </svg>`;
  }

  render() {
    return html`
      <div class="black"></div>
      <div class="shell">
        <div class="strip"></div>
        <div class="app">
          <div class="title">
            <svg width="14" height="14" viewBox="0 0 14 14"><path d="M1 1h12l-1.500 6L7 13 2.500 7z" fill="#d8232a"/><path d="M4 3l3 6 3-6" fill="none" stroke="#fff" stroke-width="1.600"/></svg>
            <span>MagNet - MagNet 1 - [View 1]</span>
            <div class="winbtns">
              <svg viewBox="0 0 46 14"><path d="M17 7.500h11" stroke="#888"/></svg>
              <svg viewBox="0 0 46 14"><path d="M18.500 4.500h7v8h-7zM20.500 4V1.500h7v8H25.500" fill="none" stroke="#888"/></svg>
              <svg viewBox="0 0 46 14"><path d="M18 1.500l11 11M29 1.500l-11 11" stroke="#888"/></svg>
            </div>
          </div>
          <div class="row r1">
            ${this.group({ w: 200, g: 8.5, items: ["new", "open", "save", "!", "print", "!", "del", "!", "undo", "redo"] }, true)}
            <div class="cloud"><b><svg width="20" height="16" viewBox="0 0 20 16"><g fill="none" stroke="#fff" stroke-width="2.400"><circle cx="10" cy="5" r="3.400"/><circle cx="5" cy="11" r="3.400"/><circle cx="15" cy="11" r="3.400"/></g></svg></b><span>拖拽上传</span></div>
          </div>
          <div class="row menu">
            <div class="logo"><svg width="14" height="18" viewBox="0 0 14 18"><path d="M2 1h8l3 3v13H2z" fill="#f6dcdc" stroke="#c9a0a0"/><path d="M3.500 5h7l-1 5-2.500 4L4.500 10z" fill="#d8232a"/><path d="M5 6l2 4 2-4" fill="none" stroke="#fff"/></svg></div>
            ${MENU.map(([a, b, w]) => html`<div class="mi" style="width:${w}px"><u>${a}</u>${b}</div>`)}
            <div class="mdi">
              <i><svg width="9" height="9" viewBox="0 0 9 9"><path d="M1 7.500h6" stroke="#333" stroke-width="2"/></svg></i>
              <i><svg width="9" height="9" viewBox="0 0 9 9"><path d="M.5 3.500h5v5h-5zM2.500 2.500v-2h6v5h-2" fill="none" stroke="#333"/></svg></i>
              <i style="margin-left:2px"><svg width="9" height="9" viewBox="0 0 9 9"><path d="M1 1l7 7M8 1l-7 7" stroke="#333" stroke-width="2"/></svg></i>
            </div>
          </div>
          <div class="row">${ROW3.map((g) => this.group(g))}</div>
          <div class="row">${ROW4.map((g) => this.group(g))}</div>
          <div class="main">
            <div class="left">
              <div class="dock"><div class="ln"></div><div class="b1"><span class="dn" style="border-top-color:#999"></span></div><div class="b2">x</div></div>
              <div class="tabs">
                <div class="tab on" style="width:48px">Object</div>
                <div class="tab" style="width:47px">Material</div>
                <div class="tab" style="width:42px;padding-left:5px">Coil</div>
                <div class="tab" style="width:50px;padding-left:6px">Problem</div>
                <div class="tab" style="width:42px;padding-left:6px">Field</div>
                <div class="tab" style="width:40px;padding-left:6px">View</div>
              </div>
              <div class="tabbody">
                <div class="tree">
                  <div class="rows">${this.tree()}</div>
                  <div class="sb">
                    <div class="sbb">${this.chev("M1 7l4-4 4 4", "#888")}</div>
                    <div style="height:225px"></div>
                    <div class="thumb" style="height:488px"></div>
                    <div style="flex:1"></div>
                    <div class="sbb">${this.chev("M1 3l4 4 4-4", "#777")}</div>
                  </div>
                </div>
              </div>
            </div>
            <div class="vt">
              ${VT.map((s, i) => html`<div class="sec" style="height:${s.h}px">
                <div class="vgrip"></div>
                <div style="height:${i === 0 ? 0 : i === 1 ? 3 : 1}px;flex:none"></div>
                ${s.items.map((it) => it === "-" ? html`<div class="vs"></div>` : html`<div class="vi ${it.endsWith(":sel") ? "sel" : ""}">${this.ic(it.split(":")[0])}</div>`)}
              </div>`)}
            </div>
            <div class="view">
              <div class="frame">
                <div class="tr">
                  <div class="corner"><svg width="19" height="19" viewBox="0 0 19 19"><path d="M0 0l19 19" stroke="#333"/><text x="12" y="9" font-size="9.5" font-family="Liberation Sans">X</text><text x="2" y="16" font-size="9.5" font-family="Liberation Sans">Y</text></svg></div>
                  ${this.rulerTop()}
                  <div class="end"></div>
                </div>
                <div class="mid">
                  <div class="lr">${this.rulerLeft()}</div>
                  <div class="canvas">${this.model()}</div>
                  <div class="vs2">
                    <div class="sbb">${this.chev("M1 7l4-4 4 4")}</div>
                    <div class="thumb" style="width:16px;height:520px;margin-top:2px"></div>
                    <div style="flex:1"></div>
                    <div class="sbb">${this.chev("M1 3l4 4 4-4")}</div>
                  </div>
                </div>
                <div class="hs">
                  <div class="bb">${this.chev("M7 1L3 5l4 4")}</div>
                  <div class="track"></div>
                  <div class="bb r">${this.chev("M3 1l4 4-4 4")}</div>
                </div>
                <div class="tabsb"><div class="vtab">View 1</div></div>
              </div>
            </div>
          </div>
          <div class="bar">
            <div class="xb"><i>x</i><i></i></div>
            <div style="width:6px;flex:none"></div>
            <div class="ib"><svg width="20" height="20" viewBox="0 0 20 20"><path d="M6 2v14h12M4 5l2-3 2 3M15 14l3 2-3 2" fill="none" stroke="#999" stroke-width="1.300"/><rect x="6" y="10" width="6" height="6" fill="none" stroke="#999"/></svg></div>
            <div class="ib"><svg width="20" height="20" viewBox="0 0 20 20"><rect x="6" y="6" width="8" height="8" fill="none" stroke="#999"/><path d="M10 3v14M3 10h14" stroke="#999"/></svg></div>
            <div class="xy">X, y:</div>
            <div class="inp">-100, 57)<svg width="10" height="10" viewBox="0 0 10 10"><path d="M1 3l4 4 4-4" fill="none" stroke="#555"/></svg></div>
            <div class="dd">millimeters<svg width="10" height="10" viewBox="0 0 10 10"><path d="M1 3l4 4 4-4" fill="none" stroke="#555"/></svg></div>
            <div class="ro">(-100, 57) mm</div>
            <div class="en">Enter</div>
          </div>
          <div class="st">
            <span class="nb" style="width:26px;padding-left:0">mm</span>
            <span style="width:77px">X: N/A</span>
            <span style="width:77px">Y: N/A</span>
            <span style="width:82px">Xg:-157.404</span>
            <span class="nb" style="width:81px">Yg:74.8999</span>
            <span class="nb" style="width:73px">Zg: N/A</span>
          </div>
        </div>
      </div>
      <div class="task"><div class="lt"></div><div class="gr"></div><div class="clock">10:10</div></div>
      <div class="side"><i></i></div>
      <div class="wm">simol<b>西莫</b></div>
      <div class="dlg">
        <div class="dt"><span>MagNet</span><svg width="12" height="12" viewBox="0 0 12 12"><path d="M1 1l10 10M11 1L1 11" stroke="#888"/></svg></div>
        <div class="db">
          <svg width="32" height="32" viewBox="0 0 32 32" style="flex:none"><path d="M16 1l16 30H0z" fill="#ffdd00" stroke="#f0b400"/><rect x="15" y="11" width="2" height="12" fill="#000"/><rect x="15" y="25" width="2" height="2" fill="#000"/></svg>
          <div class="dm">
            <div>Problem #1 failed to solve. This problem was skipped.</div>
            <div class="in">The solver was stopped.</div>
            <div class="in">(error code 145559)</div>
            <div class="gap"></div>
            <div>Refer to the Help Topics documentation and the mesher/solver log file</div>
            <div>(in the Log Files directory) for more information on the meaning of the</div>
            <div>errors.</div>
          </div>
        </div>
        <div class="df"><div class="ok">确定</div></div>
      </div>
    `;
  }
}
